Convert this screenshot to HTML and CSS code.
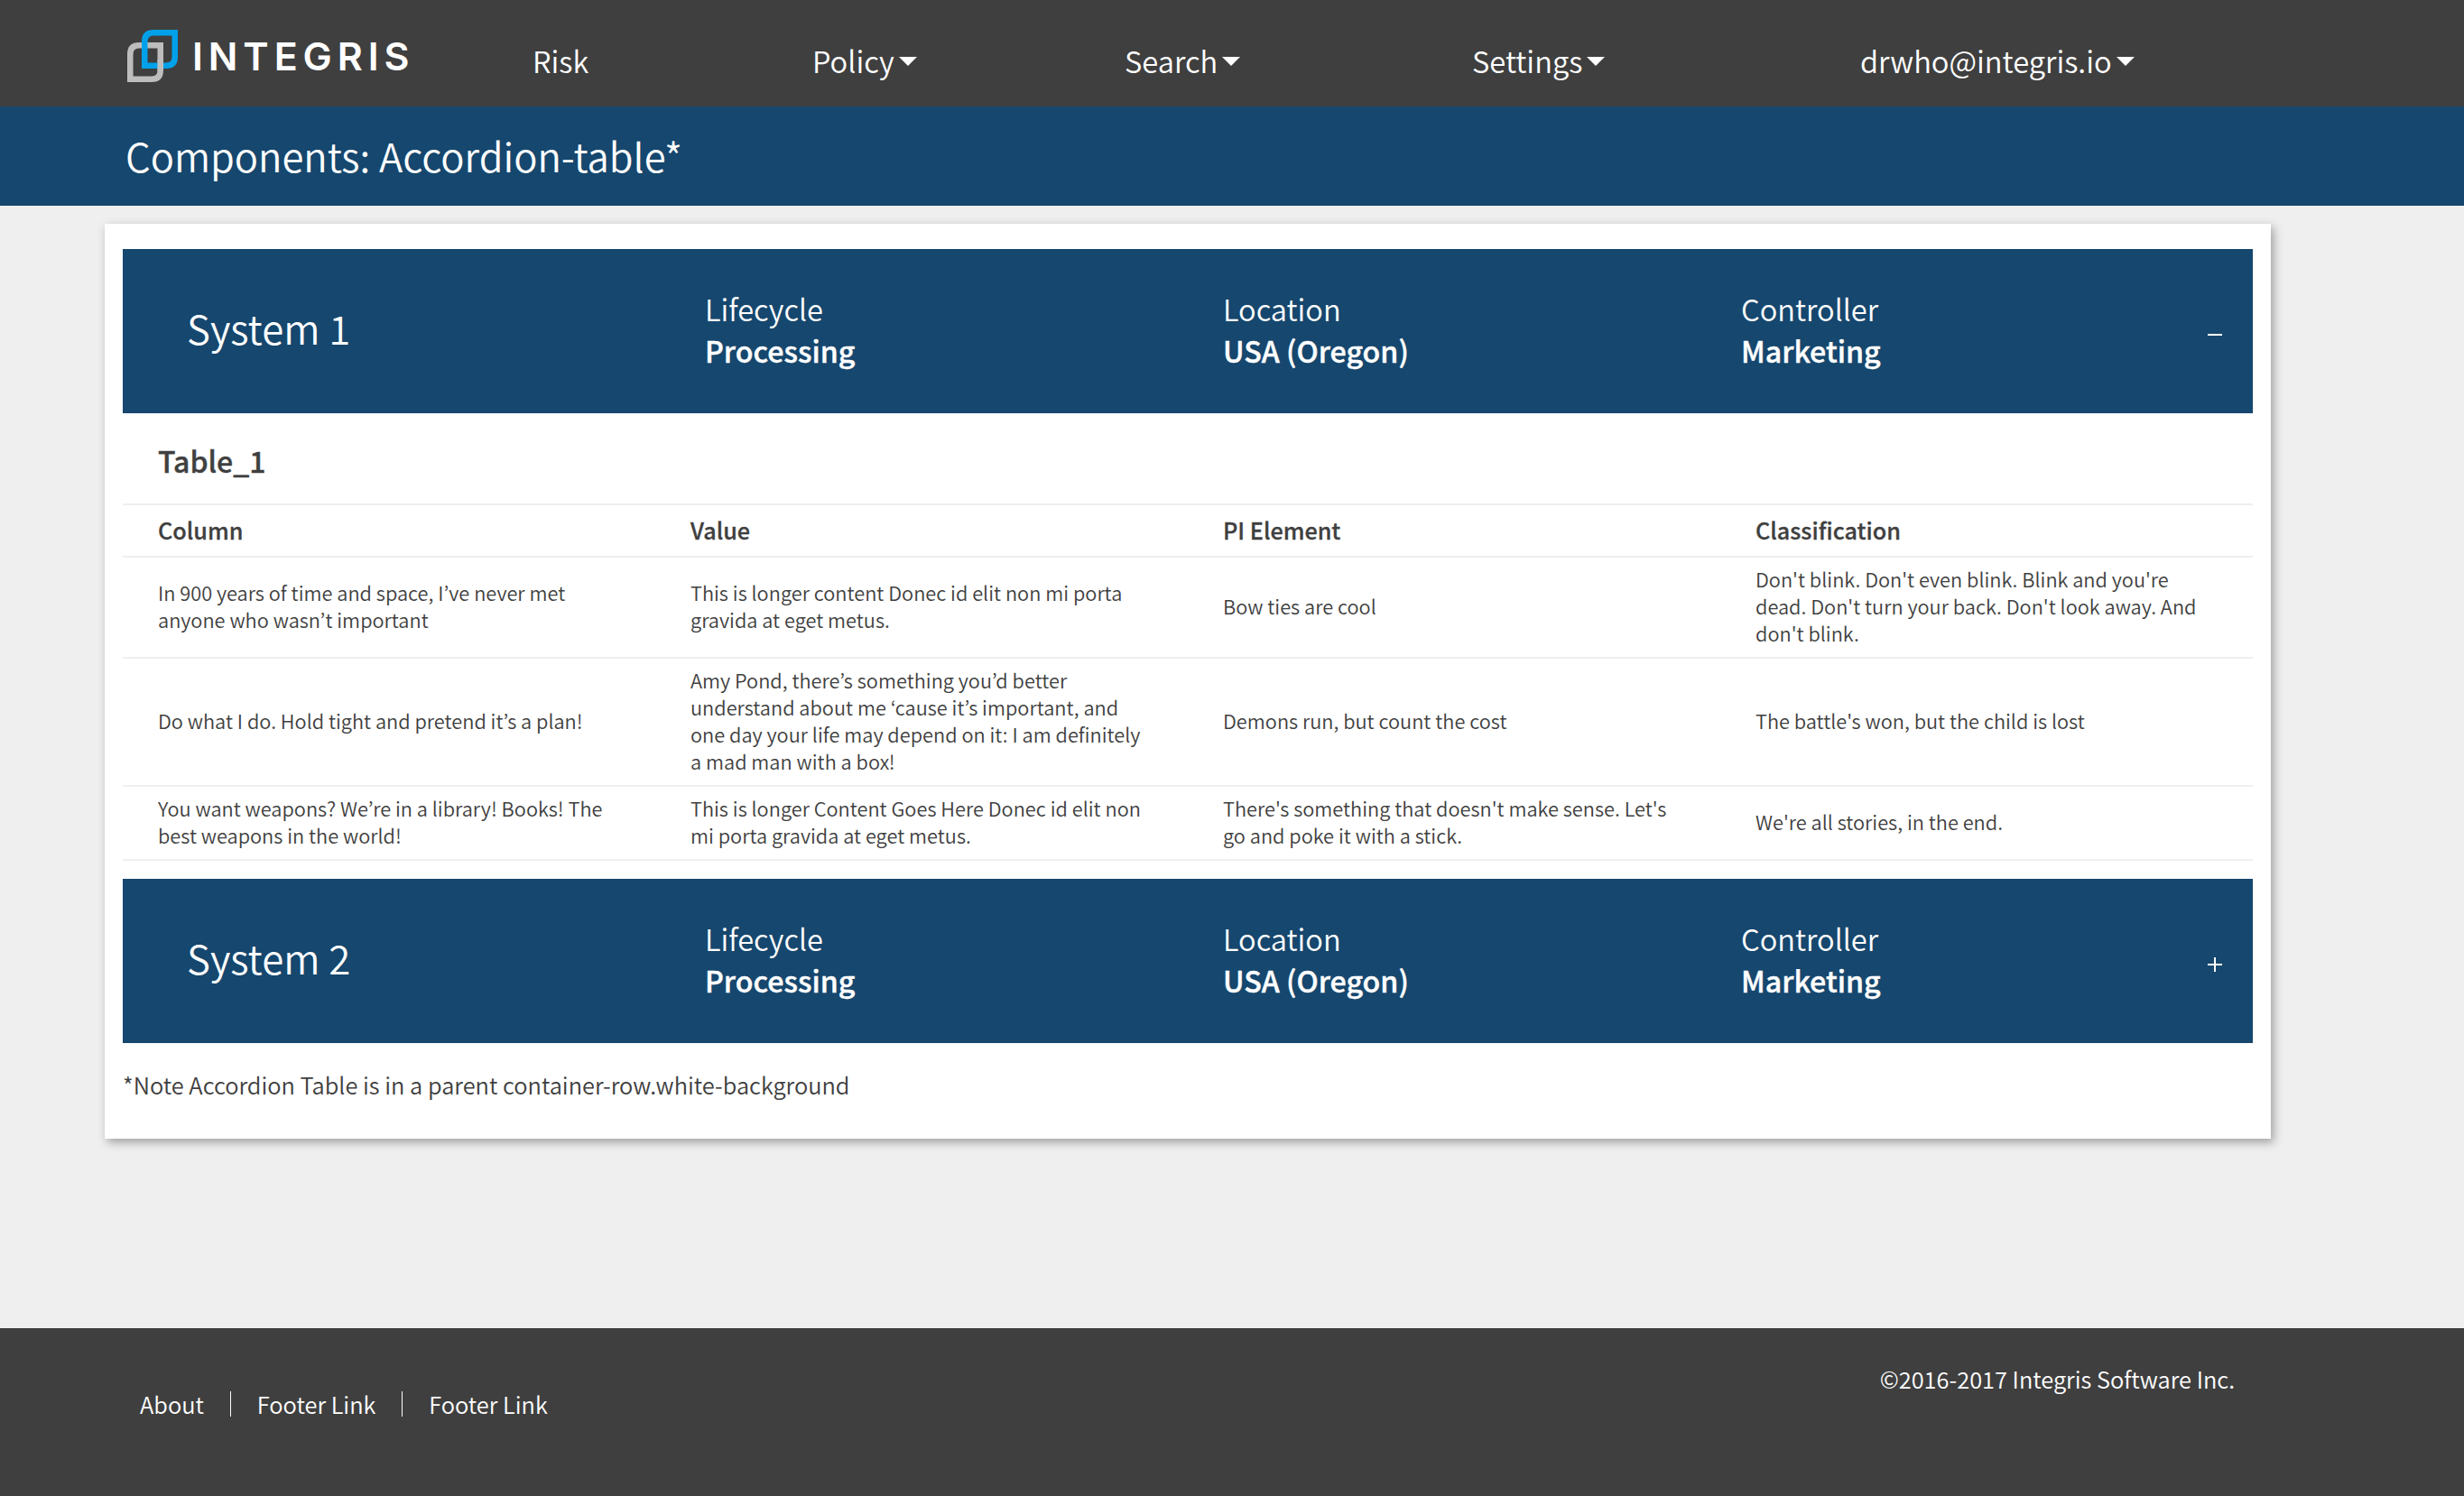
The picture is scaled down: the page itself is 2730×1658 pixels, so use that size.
FILE: index.html
```html
<!DOCTYPE html>
<html lang="en">
<head>
<meta charset="utf-8">
<title>Components: Accordion-table</title>
<link rel="stylesheet" href="styles.css">
</head>
<body>
<header class="topbar">
  <div class="logo">
    <svg class="logo-mark" width="56" height="60" viewBox="0 0 56 60" aria-hidden="true">
      <path class="mark-grey" d="M3.25 54.75V27Q3.25 17.25 13 17.25H36.75V45Q36.75 54.75 27 54.75Z"/>
      <path class="mark-blue" d="M19.25 39.75V13Q19.25 3.25 29 3.25H52.75V30Q52.75 39.75 43 39.75Z"/>
      <path class="mark-grey" d="M36.75 33V46"/>
    </svg>
    <span class="logo-text">INTEGRIS</span>
  </div>
  <nav class="nav">
    <a class="nav-risk">Risk</a>
    <a class="nav-policy caret">Policy</a>
    <a class="nav-search caret">Search</a>
    <a class="nav-settings caret">Settings</a>
    <a class="nav-user caret">drwho@integris.io</a>
  </nav>
</header>
<div class="titlebar"><h1>Components: Accordion-table*</h1></div>
<main class="main">
  <section class="card">
    <div class="acc-head">
      <div class="acc-name">System 1</div>
      <div class="acc-col"><span>Lifecycle</span><strong>Processing</strong></div>
      <div class="acc-col"><span>Location</span><strong>USA (Oregon)</strong></div>
      <div class="acc-col"><span>Controller</span><strong>Marketing</strong></div>
      <div class="acc-toggle minus"></div>
    </div>
    <h2 class="table-title">Table_1</h2>
    <div class="row row-head">
      <div>Column</div><div>Value</div><div>PI Element</div><div>Classification</div>
    </div>
    <div class="row">
      <div>In 900 years of time and space, I’ve never met anyone who wasn’t important</div>
      <div>This is longer content Donec id elit non mi porta gravida at eget metus.</div>
      <div>Bow ties are cool</div>
      <div>Don't blink. Don't even blink. Blink and you're dead. Don't turn your back. Don't look away. And don't blink.</div>
    </div>
    <div class="row">
      <div>Do what I do. Hold tight and pretend it’s a plan!</div>
      <div>Amy Pond, there’s something you’d better understand about me ‘cause it’s important, and one day your life may depend on it: I am definitely a mad man with a box!</div>
      <div>Demons run, but count the cost</div>
      <div>The battle's won, but the child is lost</div>
    </div>
    <div class="row">
      <div>You want weapons? We’re in a library! Books! The best weapons in the world!</div>
      <div>This is longer Content Goes Here Donec id elit non mi porta gravida at eget metus.</div>
      <div>There's something that doesn't make sense. Let's go and poke it with a stick.</div>
      <div>We're all stories, in the end.</div>
    </div>
    <div class="acc-head acc-second">
      <div class="acc-name">System 2</div>
      <div class="acc-col"><span>Lifecycle</span><strong>Processing</strong></div>
      <div class="acc-col"><span>Location</span><strong>USA (Oregon)</strong></div>
      <div class="acc-col"><span>Controller</span><strong>Marketing</strong></div>
      <div class="acc-toggle plus"></div>
    </div>
    <p class="note">*Note Accordion Table is in a parent container-row.white-background</p>
  </section>
</main>
<footer class="footer">
  <div class="foot-links"><a>About</a><a>Footer Link</a><a>Footer Link</a></div>
  <div class="copyright">©2016-2017 Integris Software Inc.</div>
</footer>
</body>
</html>
```
FILE: styles.css
```css
* { box-sizing: border-box; }
html, body { margin: 0; padding: 0; }
body {
  min-height: 1658px;
  display: flex;
  flex-direction: column;
  background: #efefef;
  color: #3f3f3f;
  font-family: "Noto Sans CJK KR", "Noto Sans CJK SC", "Noto Sans", sans-serif;
  font-size: 21.75px;
  font-weight: 350;
  line-height: 30px;
}
.topbar {
  height: 118px;
  background: #3f3f3f;
  color: #fff;
  display: flex;
  align-items: flex-start;
}
.logo {
  display: flex;
  align-items: flex-start;
  gap: 19px;
  width: 590px;
  padding: 33px 0 0 141px;
}
.logo-mark { flex: none; }
.mark-grey, .mark-blue { fill: none; stroke-width: 6.5; }
.mark-grey { stroke: #bdbdbd; }
.mark-blue { stroke: #00a1e9; }
.logo-text {
  font-family: Inter, sans-serif;
  font-weight: 600;
  font-size: 43px;
  line-height: 44px;
  letter-spacing: 5.9px;
  margin: 7px 0 0 -3px;
}
.nav {
  display: flex;
  font-size: 32.7px;
  line-height: 44px;
  margin-top: 45px;
}
.nav a { display: flex; align-items: center; }
.nav-risk { width: 310px; }
.nav-policy { width: 346px; }
.nav-search { width: 385px; }
.nav-settings { width: 430px; }
.caret::after {
  content: "";
  margin: 2px 0 0 5px;
  border-left: 10px solid transparent;
  border-right: 10px solid transparent;
  border-top: 10px solid #fff;
}
.titlebar {
  height: 110px;
  background: #16476e;
  color: #fff;
  padding-left: 139px;
  display: flex;
  align-items: center;
}
.titlebar h1 { margin: -3px 0 0; font-size: 43.6px; line-height: 60px; font-weight: 350; }
.main { flex: 1; padding: 20px 0 0 116px; }
.card {
  width: 2400px;
  background: #fff;
  padding: 28px 20px 0;
  height: 1014px;
  box-shadow: 3px 4px 10px rgba(0, 0, 0, .34);
}
.acc-head {
  height: 182px;
  background: #16476e;
  color: #fff;
  padding-left: 71px;
  display: grid;
  grid-template-columns: 574px 574px 574px 1fr 50px;
  align-items: center;
}
.acc-name { font-size: 43.8px; line-height: 56px; margin-top: -8px; }
.acc-col { display: flex; flex-direction: column; font-size: 32.6px; line-height: 46px; margin-top: -4px; }
.acc-col strong { font-size: 32.2px; font-weight: 500; -webkit-text-stroke: .4px #fff; }
.acc-toggle { position: relative; width: 16px; height: 16px; margin-top: 7px; }
.acc-toggle::before {
  content: "";
  position: absolute;
  left: 0;
  top: 7px;
  width: 16px;
  height: 2px;
  background: #fff;
}
.plus::after {
  content: "";
  position: absolute;
  left: 7px;
  top: 0;
  width: 2px;
  height: 16px;
  background: #fff;
}
.table-title {
  margin: 0;
  height: 100px;
  padding: 32px 0 0 39px;
  font-size: 32px;
  line-height: 40px;
  font-weight: 500;
  -webkit-text-stroke: .4px #3f3f3f;
}
.row {
  display: grid;
  grid-template-columns: repeat(4, 590px);
  align-items: center;
  padding: 9px 0 11px;
  border-bottom: 2px solid #efefef;
}
.row > div { padding: 0 39px; }
.row-head {
  height: 60px;
  padding: 0 0 2px;
  border-top: 2px solid #efefef;
  font-size: 25.2px;
  font-weight: 500;
  -webkit-text-stroke: .3px #3f3f3f;
}
.acc-second { margin-top: 20px; }
.note { margin: 26px 0 0; font-size: 25.4px; line-height: 40px; }
.footer {
  height: 186px;
  background: #3f3f3f;
  color: #fff;
  display: flex;
  justify-content: space-between;
  font-size: 25.4px;
  line-height: 40px;
  padding: 0 254px 0 155px;
}
.foot-links { display: flex; margin-top: 64px; }
.foot-links a + a { margin-left: 29px; padding-left: 29px; border-left: 1.5px solid #fff; line-height: 28px; margin-top: 6px; height: 28px; }
.copyright { margin-top: 36px; }
```
